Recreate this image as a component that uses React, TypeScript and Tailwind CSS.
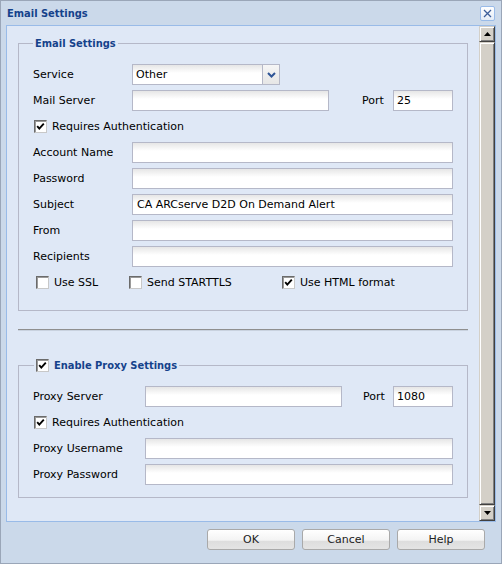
import React from 'react'

const font = "font-['DejaVu_Sans',sans-serif]"
const boldFont = "font-['DejaVu_Sans_Condensed','DejaVu_Sans',sans-serif] font-bold"

function Check({ checked }: { checked?: boolean }) {
  return (
    <span className="flex h-[13px] w-[13px] shrink-0 items-center justify-center border border-t-[#6b6b6b] border-l-[#6b6b6b] border-b-[#c8c8c8] border-r-[#c8c8c8] bg-white shadow-[inset_1px_1px_#9a9a9a]">
      {checked && (
        <svg width="11" height="11" viewBox="0 0 11 11">
          <path d="M2.2 5.2 L4.3 7.6 L8.8 2.6" fill="none" stroke="#000" strokeWidth="1.9" />
        </svg>
      )}
    </span>
  )
}

function CheckLabel({ label, checked }: { label: string; checked?: boolean }) {
  return (
    <label className="flex items-center gap-[5px] pl-[1px]">
      <Check checked={checked} />
      <span>{label}</span>
    </label>
  )
}

function TextBox({ value, className = '' }: { value?: string; className?: string }) {
  return (
    <div
      className={`flex h-[21px] items-center border border-[#b5b8c8] bg-[linear-gradient(to_bottom,#e6e6e6,#ffffff_8px)] pl-[3px] text-black ${className}`}
    >
      {value}
    </div>
  )
}

function Row({ label, labelW, children }: { label: string; labelW: string; children: React.ReactNode }) {
  return (
    <div className="flex h-[21px] items-center">
      <span className={`${labelW} shrink-0`}>{label}</span>
      {children}
    </div>
  )
}

function ScrollButton({ up }: { up?: boolean }) {
  return (
    <div className="flex h-[16px] items-center justify-center border border-t-[#d4d0c8] border-l-[#d4d0c8] border-b-[#404040] border-r-[#404040] bg-[#d4d0c8] shadow-[inset_1px_1px_#fff,inset_-1px_-1px_#808080]">
      <svg width="7" height="4" viewBox="0 0 7 4">
        <path d={up ? 'M0 4 L3.5 0 L7 4 Z' : 'M0 0 L7 0 L3.5 4 Z'} fill="#000" />
      </svg>
    </div>
  )
}

function Btn({ children }: { children: React.ReactNode }) {
  return (
    <button className="flex h-[21px] w-[88px] items-center justify-center rounded-[3px] border border-[#a9a9a9] bg-[linear-gradient(to_bottom,#ffffff_0%,#f3f3f3_55%,#dddddd_56%,#e4e4e4_100%)] text-[#222]">
      {children}
    </button>
  )
}

export default function App() {
  return (
    <div className={`${font} bg-white text-[11px] leading-[13px] text-black`}>
      <div className="flex h-[564px] w-[502px] flex-col border border-[#9aa6b8] bg-[#cbd9ea]">
        {/* title bar */}
        <div className="flex h-[24px] shrink-0 items-center justify-between pl-[6px] pr-[6px]">
          <span className={`${boldFont} text-[#15428b]`}>Email Settings</span>
          <span className="flex h-[15px] w-[15px] items-center justify-center rounded-[2px] border border-[#99bbe8] bg-[linear-gradient(to_bottom,#ffffff,#e4ecf7)]">
            <svg width="11" height="11" viewBox="0 0 11 11">
              <path d="M2 2 L9 9 M9 2 L2 9" stroke="#3c5e9a" strokeWidth="1.3" />
            </svg>
          </span>
        </div>

        {/* content panel */}
        <div className="mx-[5px] flex h-[497px] shrink-0 border border-[#99bbe8] bg-[#dfe8f6]">
          <div className="flex-1 overflow-hidden pl-[11px] pr-[11px] pt-[11px]">
            <fieldset className="border border-[#b5b8c8] px-[14px] pb-[17px] pt-[14px]">
              <legend className={`${boldFont} px-[2px] leading-[13px] text-[#15428b]`}>Email Settings</legend>
              <div className="flex flex-col gap-[5px]">
                <Row label="Service" labelW="w-[99px]">
                  <div className="flex h-[21px] w-[148px] border border-[#b5b8c8] bg-[linear-gradient(to_bottom,#e6e6e6,#ffffff_8px)]">
                    <span className="flex flex-1 items-center pl-[3px]">Other</span>
                    <span className="flex w-[17px] items-center justify-center border-l border-[#b5b8c8] bg-[linear-gradient(to_bottom,#f6f6f6,#e6e6e6)]">
                      <svg width="9" height="6" viewBox="0 0 9 6">
                        <path d="M1 1 L4.5 4.5 L8 1" fill="none" stroke="#2f5596" strokeWidth="2" />
                      </svg>
                    </span>
                  </div>
                </Row>
                <Row label="Mail Server" labelW="w-[99px]">
                  <TextBox className="w-[197px]" />
                  <span className="ml-[33px] w-[31px]">Port</span>
                  <TextBox value="25" className="w-[60px]" />
                </Row>
                <div className="flex h-[21px] items-center">
                  <CheckLabel label="Requires Authentication" checked />
                </div>
                <Row label="Account Name" labelW="w-[99px]">
                  <TextBox className="flex-1" />
                </Row>
                <Row label="Password" labelW="w-[99px]">
                  <TextBox className="flex-1" />
                </Row>
                <Row label="Subject" labelW="w-[99px]">
                  <TextBox value="CA ARCserve D2D On Demand Alert" className="flex-1 pl-[4px]" />
                </Row>
                <Row label="From" labelW="w-[99px]">
                  <TextBox className="flex-1" />
                </Row>
                <Row label="Recipients" labelW="w-[99px]">
                  <TextBox className="flex-1" />
                </Row>
                <div className="flex h-[21px] items-center pl-[2px]">
                  <div className="w-[93px]">
                    <CheckLabel label="Use SSL" />
                  </div>
                  <div className="w-[153px]">
                    <CheckLabel label="Send STARTTLS" />
                  </div>
                  <CheckLabel label="Use HTML format" checked />
                </div>
              </div>
            </fieldset>

            <div className="mt-[18px] border-t border-b border-t-[#8f8f8f] border-b-[#c9d2df]" />

            <fieldset className="mt-[28px] border border-[#b5b8c8] px-[14px] pb-[12px] pt-[14px]">
              <legend className={`${boldFont} ml-[1px] flex items-center gap-[5px] px-[2px] leading-[13px] text-[#15428b]`}>
                <Check checked />
                <span>Enable Proxy Settings</span>
              </legend>
              <div className="flex flex-col gap-[5px]">
                <Row label="Proxy Server" labelW="w-[112px]">
                  <TextBox className="w-[197px]" />
                  <span className="ml-[21px] w-[30px]">Port</span>
                  <TextBox value="1080" className="w-[60px]" />
                </Row>
                <div className="flex h-[21px] items-center">
                  <CheckLabel label="Requires Authentication" checked />
                </div>
                <Row label="Proxy Username" labelW="w-[112px]">
                  <TextBox className="flex-1" />
                </Row>
                <Row label="Proxy Password" labelW="w-[112px]">
                  <TextBox className="flex-1" />
                </Row>
              </div>
            </fieldset>
          </div>

          {/* scrollbar */}
          <div className="flex w-[16px] shrink-0 flex-col bg-[#e8e6e1]">
            <ScrollButton up />
            <div className="flex-1 border border-t-[#d4d0c8] border-l-[#d4d0c8] border-b-[#404040] border-r-[#404040] bg-[#d4d0c8] shadow-[inset_1px_1px_#fff,inset_-1px_-1px_#808080]" />
            <ScrollButton />
          </div>
        </div>

        {/* buttons */}
        <div className="flex flex-1 items-start justify-end gap-[7px] pr-[16px] pt-[7px]">
          <Btn>OK</Btn>
          <Btn>Cancel</Btn>
          <Btn>Help</Btn>
        </div>
      </div>
    </div>
  )
}
